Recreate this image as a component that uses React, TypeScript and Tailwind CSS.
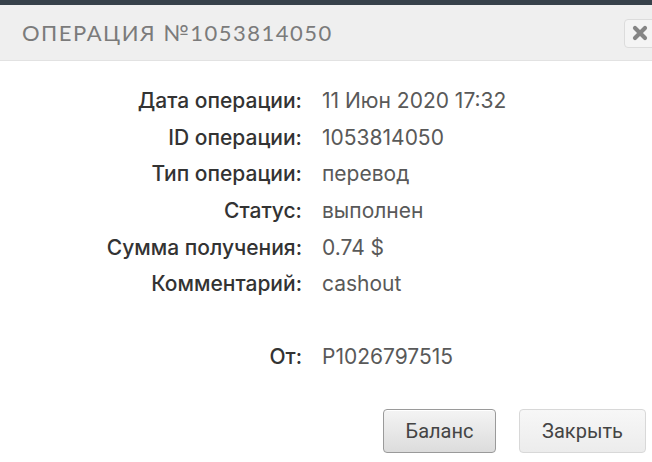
import React from 'react'

const rows: Array<[string, string]> = [
    ['Дата операции:', '11 Июн 2020 17:32'],
    ['ID операции:', '1053814050'],
    ['Тип операции:', 'перевод'],
    ['Статус:', 'выполнен'],
    ['Сумма получения:', '0.74 $'],
    ['Комментарий:', 'cashout'],
]

const App: React.FC = () => {
    return (
        <div className="w-[652px] h-[462px] bg-white overflow-hidden flex flex-col">
            <div className="h-[5px] bg-[#37414a] shrink-0"></div>
            <div className="h-[56px] bg-[#efefef] border-b border-[#e2e2e2] flex items-center justify-between pl-[22px] shrink-0">
                <div className="text-[22px] tracking-[1.5px] text-[#7b7b7b] font-['Lato',sans-serif]">
                    ОПЕРАЦИЯ №1053814050
                </div>
                <div className="w-[32px] h-[29px] mr-[-4px] mt-[1px] rounded-[4px] border border-[#dcdcdc] bg-[#f4f4f4] flex items-center justify-center">
                    <svg width="18" height="18" viewBox="0 0 18 18">
                        <path d="M4 4 L14 14 M14 4 L4 14" stroke="#858585" strokeWidth="4.2" strokeLinecap="round" />
                    </svg>
                </div>
            </div>
            <div className="font-['Inter',sans-serif] text-[21px] pt-[26px]">
                <div className="grid grid-cols-[302px_1fr] gap-x-[20px] gap-y-[8.7px] leading-[28px]">
                    {rows.map(([label, value]) => (
                        <React.Fragment key={label}>
                            <div className="text-right font-medium text-[#333]">{label}</div>
                            <div className="text-[#595959]">{value}</div>
                        </React.Fragment>
                    ))}
                    <div className="text-right font-medium text-[#333] mt-[36px]">От:</div>
                    <div className="text-[#595959] mt-[36px]">P1026797515</div>
                </div>
                <div className="flex justify-end gap-[23px] pr-[6px] mt-[38px] font-['Roboto',sans-serif] text-[20px] text-[#444]">
                    <button className="w-[113px] h-[44px] rounded-[4px] border border-[#9a9a9a] bg-gradient-to-b from-[#f4f4f4] to-[#dcdcdc] shadow-[inset_0_1px_0_#fff]">
                        Баланс
                    </button>
                    <button className="w-[127px] h-[44px] rounded-[4px] border border-[#d8d8d8] bg-gradient-to-b from-[#f7f7f7] to-[#ececec]">
                        Закрыть
                    </button>
                </div>
            </div>
        </div>
    )
}

export default App
